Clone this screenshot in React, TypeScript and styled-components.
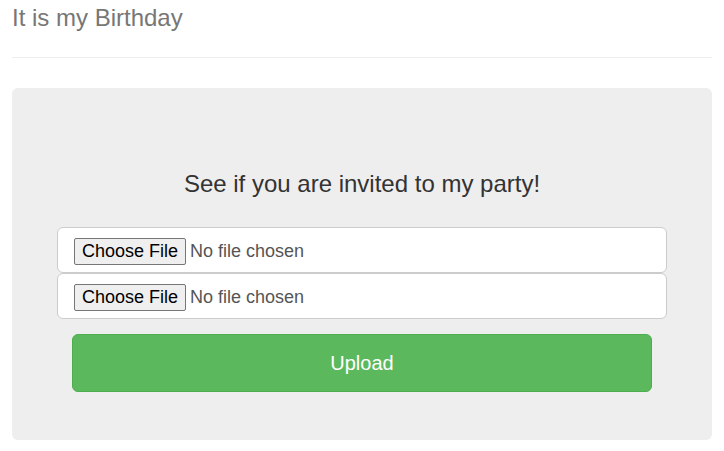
import React from "react";
import styled, { createGlobalStyle } from "styled-components";

const Global = createGlobalStyle`
  html, body { margin: 0; padding: 0; background: #fff; }
  body { font-family: "Liberation Sans", Arial, sans-serif; color: #333; }
  * { box-sizing: border-box; }
`;

const Container = styled.div`
  padding: 0 12px;
`;

const PageHeader = styled.div`
  padding-bottom: 26px;
  border-bottom: 1px solid #eee;
  margin-bottom: 30px;
`;

const Title = styled.h3`
  margin: 5px 0 0;
  font-size: 24px;
  font-weight: normal;
  line-height: 1.1;
  color: #777;
`;

const Jumbotron = styled.div`
  background: #eee;
  border-radius: 6px;
  padding: 80px 45px 48px;
  display: flex;
  flex-direction: column;
  align-items: center;
`;

const Lead = styled.p`
  margin: 0 0 27px;
  font-size: 24px;
  line-height: 32px;
  color: #333;
`;

const FileInput = styled.input`
  display: block;
  width: 100%;
  height: 46px;
  padding: 10px 16px 0;
  font-family: "Liberation Sans", Arial, sans-serif;
  font-size: 18px;
  line-height: 1.33;
  color: #555;
  background: #fff;
  border: 1px solid #ccc;
  border-radius: 6px;
  &::file-selector-button {
    font-family: "Liberation Sans", Arial, sans-serif;
    font-size: 18px;
    color: #000;
    background: #efefef;
    border: 1px solid #767676;
    border-radius: 2px;
    padding: 2px 7px;
    margin-right: 4px;
  }
`;

const Upload = styled.button`
  margin-top: 15px;
  width: calc(100% - 30px);
  height: 58px;
  font-family: "Liberation Sans", Arial, sans-serif;
  font-size: 20px;
  color: #fff;
  background: #5cb85c;
  border: 1px solid #4cae4c;
  border-radius: 6px;
  cursor: pointer;
`;

export default function App() {
  return (
    <Container>
      <Global />
      <PageHeader>
        <Title>It is my Birthday</Title>
      </PageHeader>
      <Jumbotron>
        <Lead>See if you are invited to my party!</Lead>
        <FileInput type="file" />
        <FileInput type="file" />
        <Upload>Upload</Upload>
      </Jumbotron>
    </Container>
  );
}
